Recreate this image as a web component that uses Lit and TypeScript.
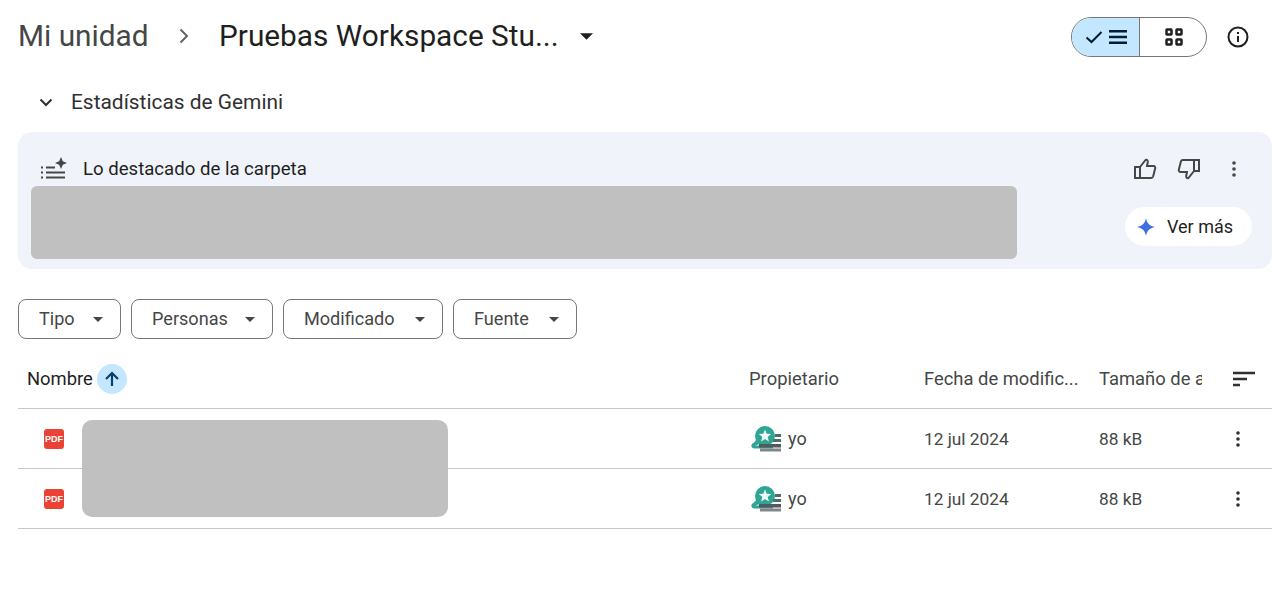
import { LitElement, html, css, svg } from "lit";
import { customElement } from "lit/decorators.js";

const caret = svg`<svg class="caret" width="10" height="5" viewBox="0 0 10 5"><path d="M0 0h10L5 5z" fill="currentColor"/></svg>`;
const dots = svg`<svg width="4" height="16" viewBox="0 0 4 16"><circle cx="2" cy="2" r="1.8" fill="currentColor"/><circle cx="2" cy="8" r="1.8" fill="currentColor"/><circle cx="2" cy="14" r="1.8" fill="currentColor"/></svg>`;
const pdf = html`<span class="pdf">PDF</span>`;
const avatar = svg`<svg class="avatar" width="30" height="26" viewBox="0 0 30 26">
  <circle cx="14" cy="10" r="10" fill="#2fa596"/>
  <path d="M6 13 3 16.500C1 17.500 0 19 .5 20.500 1 22 2.500 22.500 4 22.500h18v-3H4l10-3z" fill="#2fa596"/>
  <path d="M14 3.500l1.700 4.300 4.500.3-3.500 2.900 1.200 4.500-3.900-2.500-3.900 2.500 1.200-4.500-3.500-2.900 4.500-.3z" fill="#eef8f6"/>
  <rect x="24" y="8" width="6" height="3" fill="#4f6f6a"/>
  <rect x="22" y="13" width="8" height="3" fill="#4f6f6a"/>
  <rect x="8" y="18" width="22" height="3.500" fill="#55595c"/>
  <rect x="9" y="22.500" width="21" height="3" fill="#80868b"/>
</svg>`;

@customElement("app-root")
export class AppRoot extends LitElement {
  static styles = css`
    :host { display: block; width: 1281px; height: 593px; background: #fff; font-family: Roboto, "Liberation Sans", sans-serif; color: #1f1f1f; position: relative; overflow: hidden; }
    .page { padding: 0 9px 0 18px; display: flex; flex-direction: column; }
    .top { height: 72px; display: flex; align-items: center; }
    .crumb { font-size: 29.800px; color: #444746; width: 130px; white-space: nowrap; margin-bottom: 2px; }
    .sep { width: 71px; display: flex; justify-content: flex-start; padding-left: 31px; box-sizing: border-box; color: #5f6368; }
    .title { font-size: 29.800px; color: #1f1f1f; width: 361px; white-space: nowrap; margin-bottom: 2px; }
    .titlecaret { color: #1f1f1f; display: flex; }
    .titlecaret svg { width: 13px; height: 7px; }
    .right { margin-left: auto; display: flex; align-items: center; }
    .toggle { display: flex; width: 136px; height: 40px; box-sizing: border-box; border: 1px solid #747775; border-radius: 20px; overflow: hidden; margin: 2px 20px 0 0; }
    .toggle > div { display: flex; align-items: center; justify-content: center; flex: 1; }
    .toggle .on { width: 68px; flex: none; box-sizing: border-box; background: #c2e7ff; border-right: 1px solid #747775; color: #001d35; gap: 6px; }
    .grid { padding-left: 2px; }
    .info { margin: 2px 23px 0 0; display: flex; }
    .gem { height: 60px; display: flex; align-items: center; }
    .gem svg { margin-left: 21px; }
    .gem span { margin-left: 18px; font-size: 20.900px; color: #303030; }
    .card { height: 137px; background: #f0f4fa; border-radius: 14px; display: flex; box-sizing: border-box; padding: 24px 20px 0 22px; justify-content: space-between; }
    .head { display: flex; align-items: center; gap: 15px; font-size: 18.600px; color: #1f1f1f; height: 26px; }
    .side { display: flex; flex-direction: column; align-items: flex-end; }
    .fb { display: flex; align-items: center; height: 26px; color: #444746; }
    .fb svg:nth-child(2) { margin-left: 20px; }
    .fb svg:nth-child(3) { margin-left: 31px; margin-right: 16px; }
    .more { margin-top: 25px; width: 127px; height: 39px; border-radius: 20px; background: #fff; display: flex; align-items: center; box-sizing: border-box; padding-left: 12px; gap: 12px; font-size: 18px; }
    .filters { margin-top: 30px; display: flex; gap: 10px; }
    .chip { height: 40px; box-sizing: border-box; border: 1px solid #747775; border-radius: 8px; display: flex; align-items: center; justify-content: space-between; padding: 0 17px 2px 20px; font-size: 18.100px; color: #444746; }
    .chip svg { margin-top: 2px; }
    .table { margin-top: 20px; }
    .row { display: grid; grid-template-columns: 731px 175px 175px 134px 1fr; align-items: center; border-bottom: 1px solid #c7c7c7; box-sizing: border-box; height: 60px; font-size: 17.300px; color: #444746; }
    .row.hd { height: 50px; padding-bottom: 10px; font-size: 18.400px; }
    .name { display: flex; align-items: center; padding-left: 9px; gap: 4px; color: #1f1f1f; }
    .arrow { width: 30px; height: 30px; border-radius: 50%; background: #c2e7ff; display: flex; align-items: center; justify-content: center; }
    .clip { overflow: hidden; white-space: nowrap; width: 103px; }
    .own { display: flex; align-items: center; gap: 7px; margin-left: 2px; font-size: 18px; }
    .file { padding-left: 26px; }
    .pdf { width: 20px; height: 20px; border-radius: 3px; background: #ea4335; color: #fff; font: 700 9px/20px "Liberation Sans", sans-serif; text-align: center; display: block; }
    .end { display: flex; color: #303030; }
    .end.dots { margin-left: 3px; }
    .end.sort { margin-left: -1px; }
    .mask { position: absolute; background: #c0c0c0; }
    .m1 { left: 31px; top: 186px; width: 986px; height: 73px; border-radius: 6px; }
    .m2 { left: 82px; top: 420px; width: 366px; height: 97px; border-radius: 10px; }
  `;

  private chip(label: string, w: number) {
    return html`<div class="chip" style="width:${w}px"><span>${label}</span>${caret}</div>`;
  }

  private fileRow() {
    return html`<div class="row">
      <div class="file">${pdf}</div>
      <div class="own">${avatar}<span>yo</span></div>
      <div>12 jul 2024</div>
      <div>88 kB</div>
      <div class="end dots">${dots}</div>
    </div>`;
  }

  render() {
    return html`<div class="page">
      <div class="top">
        <div class="crumb">Mi unidad</div>
        <div class="sep"><svg width="10" height="16" viewBox="0 0 10 16"><path d="M1.500 1.500 8 8l-6.500 6.500" fill="none" stroke="currentColor" stroke-width="2"/></svg></div>
        <div class="title">Pruebas Workspace Stu...</div>
        <div class="titlecaret">${caret}</div>
        <div class="right">
          <div class="toggle">
            <div class="on">
              <svg width="18" height="14" viewBox="0 0 18 14"><path d="M1.500 7.500 6.500 12 16.500 2" fill="none" stroke="currentColor" stroke-width="2"/></svg>
              <svg width="18" height="14" viewBox="0 0 18 14"><path d="M0 1.200h18M0 7h18M0 12.800h18" stroke="currentColor" stroke-width="2.400"/></svg>
            </div>
            <div class="grid">
              <svg width="18" height="18" viewBox="0 0 18 18" fill="none" stroke="#1f1f1f" stroke-width="2.500"><rect x="1.500" y="1.500" width="5" height="5" rx=".5"/><rect x="11.500" y="1.500" width="5" height="5" rx=".5"/><rect x="1.500" y="11.500" width="5" height="5" rx=".5"/><rect x="11.500" y="11.500" width="5" height="5" rx=".5"/></svg>
            </div>
          </div>
          <div class="info"><svg width="22" height="22" viewBox="0 0 22 22"><circle cx="11" cy="11" r="9.500" fill="none" stroke="#1f1f1f" stroke-width="2"/><rect x="10" y="10" width="2" height="6" fill="#1f1f1f"/><rect x="10" y="6" width="2" height="2" fill="#1f1f1f"/></svg></div>
        </div>
      </div>
      <div class="gem">
        <svg width="14" height="9" viewBox="0 0 14 9"><path d="M1.500 1.500 7 7l5.500-5.500" fill="none" stroke="#303030" stroke-width="2"/></svg>
        <span>Estadísticas de Gemini</span>
      </div>
      <div class="card">
        <div class="head">
          <svg width="28" height="26" viewBox="0 0 28 26"><path d="M21 1l1.800 4.200L27 7l-4.200 1.800L21 13l-1.800-4.200L15 7l4.200-1.800z" fill="#444746"/><path d="M6 11.500h9M6 16.500h19M6 21.500h19M1 11.500h2M1 16.500h2M1 21.500h2" stroke="#444746" stroke-width="2"/></svg>
          <span>Lo destacado de la carpeta</span>
        </div>
        <div class="side">
          <div class="fb">
            <svg width="24" height="22" viewBox="0 0 24 22" fill="none" stroke="#444746" stroke-width="2"><path d="M7 20V9l5.500-7c1.500-.5 2.500.5 2.300 2L14 8h6.500c1.300 0 2 1.200 1.700 2.300l-2 8c-.3 1-1 1.700-2 1.700zM7 9H2v11h5"/></svg>
            <svg width="24" height="22" viewBox="0 0 24 22" fill="none" stroke="#444746" stroke-width="2"><path d="M17 2v11l-5.500 7c-1.500.5-2.500-.5-2.300-2L10 14H3.500c-1.300 0-2-1.200-1.700-2.300l2-8C4.100 2.700 4.800 2 5.800 2zM17 13h5V2h-5"/></svg>
            ${dots}
          </div>
          <div class="more">
            <svg width="18" height="18" viewBox="0 0 18 18"><path d="M9 0c.8 5 3.500 8 9 9-5.500 1-8.200 4-9 9-.8-5-3.500-8-9-9 5.500-1 8.200-4 9-9z" fill="#3f6fe0"/></svg>
            <span>Ver más</span>
          </div>
        </div>
      </div>
      <div class="filters">
        ${this.chip("Tipo", 103)}${this.chip("Personas", 142)}${this.chip("Modificado", 160)}${this.chip("Fuente", 124)}
      </div>
      <div class="table">
        <div class="row hd">
          <div class="name"><span>Nombre</span><span class="arrow"><svg width="16" height="16" viewBox="0 0 16 16"><path d="M8 15V2M2 8l6-6 6 6" fill="none" stroke="#0b3f6b" stroke-width="2.200"/></svg></span></div>
          <div>Propietario</div>
          <div>Fecha de modific...</div>
          <div class="clip">Tamaño de a</div>
          <div class="end sort"><svg width="24" height="16" viewBox="0 0 24 16"><path d="M1 2h22M1 8h14M1 14h7" stroke="#303030" stroke-width="2.500"/></svg></div>
        </div>
        ${this.fileRow()}${this.fileRow()}
      </div>
    </div>
    <div class="mask m1"></div>
    <div class="mask m2"></div>`;
  }
}
